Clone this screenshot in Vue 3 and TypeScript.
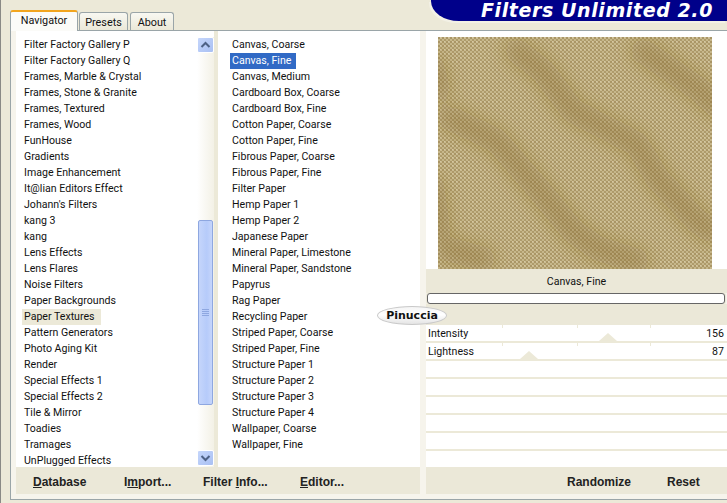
<script setup lang="ts">
const filters: string[] = ['Filter Factory Gallery P','Filter Factory Gallery Q','Frames, Marble & Crystal','Frames, Stone & Granite','Frames, Textured','Frames, Wood','FunHouse','Gradients','Image Enhancement','It@lian Editors Effect',"Johann's Filters",'kang 3','kang','Lens Effects','Lens Flares','Noise Filters','Paper Backgrounds','Paper Textures','Pattern Generators','Photo Aging Kit','Render','Special Effects 1','Special Effects 2','Tile & Mirror','Toadies','Tramages','UnPlugged Effects']
const textures: string[] = ['Canvas, Coarse','Canvas, Fine','Canvas, Medium','Cardboard Box, Coarse','Cardboard Box, Fine','Cotton Paper, Coarse','Cotton Paper, Fine','Fibrous Paper, Coarse','Fibrous Paper, Fine','Filter Paper','Hemp Paper 1','Hemp Paper 2','Japanese Paper','Mineral Paper, Limestone','Mineral Paper, Sandstone','Papyrus','Rag Paper','Recycling Paper','Striped Paper, Coarse','Striped Paper, Fine','Structure Paper 1','Structure Paper 2','Structure Paper 3','Structure Paper 4','Wallpaper, Coarse','Wallpaper, Fine']
const sliders = [
  { label: 'Intensity', value: 156 },
  { label: 'Lightness', value: 87 },
  { label: '', value: -1 },
  { label: '', value: -1 },
  { label: '', value: -1 },
  { label: '', value: -1 },
  { label: '', value: -1 },
  { label: '', value: -1 },
]
const thumb = (v: number) => `${4 + (v / 255) * 291 - 9}px`
</script>

<template>
  <div class="app">
    <header class="top">
      <nav class="tabs">
        <span class="tab active">Navigator</span>
        <span class="tab presets">Presets</span>
        <span class="tab about">About</span>
      </nav>
      <div class="banner">Filters Unlimited 2.0</div>
    </header>
    <main class="panel">
      <section class="left">
        <div class="lists">
          <ul class="list one">
            <li v-for="f in filters" :key="f"><span :class="{ soft: f === 'Paper Textures' }">{{ f }}</span></li>
          </ul>
          <div class="scroll">
            <div class="sbtn">
              <svg width="11" height="8" viewBox="0 0 11 8"><path d="M1.5 6 5.5 2l4 4" fill="none" stroke="#4d6185" stroke-width="2"/></svg>
            </div>
            <div class="track">
              <div class="sthumb"><i></i><i></i><i></i><i></i></div>
            </div>
            <div class="sbtn">
              <svg width="11" height="8" viewBox="0 0 11 8"><path d="M1.5 2 5.5 6l4-4" fill="none" stroke="#4d6185" stroke-width="2"/></svg>
            </div>
          </div>
          <div class="stripe"></div>
          <ul class="list two">
            <li v-for="t in textures" :key="t"><span :class="{ sel: t === 'Canvas, Fine' }">{{ t }}</span></li>
          </ul>
        </div>
        <div class="bar lbar">
          <button class="b1"><u>D</u>atabase</button>
          <button class="b2">I<u>m</u>port...</button>
          <button class="b3">Filter <u>I</u>nfo...</button>
          <button class="b4"><u>E</u>ditor...</button>
        </div>
      </section>
      <section class="right">
        <div class="preview">
          <svg class="texture" width="274" height="232" viewBox="0 0 274 232">
            <defs>
              <pattern id="weave" width="4" height="4" patternUnits="userSpaceOnUse">
                <rect width="4" height="4" fill="#bdac82"/>
                <rect width="2" height="2" fill="#aa9666"/>
                <rect x="2" y="2" width="2" height="2" fill="#ae9b6b"/>
                <rect x="2" width="2" height="2" fill="#cbbc92"/>
                <rect y="2" width="2" height="2" fill="#c6b78b"/>
                <rect x="2" y="0" width="1" height="1" fill="#d6c9a3"/>
              </pattern>
              <filter id="soft" x="-20%" y="-20%" width="140%" height="140%">
                <feGaussianBlur stdDeviation="9"/>
              </filter>
            </defs>
            <rect width="274" height="232" fill="url(#weave)"/>
            <g filter="url(#soft)" fill="none" stroke="#7d5f22" stroke-opacity=".34" stroke-width="24" stroke-linecap="round" stroke-linejoin="round">
              <path d="M79 14 105 34 135 74 199 107 219 141 259 184 274 194"/>
              <path d="M12 81 59 104 102 154 135 194 159 211 199 224"/>
              <path d="M205 14 259 51 280 70"/>
              <path d="M10 212 45 222"/>
              <path d="M-6 30 0 50M-6 150 0 190"/>
            </g>
          </svg>
        </div>
        <div class="caption">Canvas, Fine</div>
        <div class="progress"></div>
        <div class="gap"></div>
        <div v-for="(s, i) in sliders" :key="i" class="slider">
          <span>{{ s.label }}</span>
          <span>{{ s.value >= 0 ? s.value : '' }}</span>
          <template v-if="s.value >= 0">
            <em class="tick t1"></em><em class="tick t2"></em><em class="tick t3"></em>
            <b class="tri" :style="{ left: thumb(s.value) }"></b>
          </template>
        </div>
        <div class="bar rbar">
          <button class="b5">Randomize</button>
          <button class="b6">Reset</button>
        </div>
      </section>
      <div class="badge">Pinuccia</div>
    </main>
  </div>
</template>

<style scoped>
.app {
  width: 727px;
  height: 503px;
  overflow: hidden;
  background: #ece9d8;
  font-family: Roboto, "Noto Sans", sans-serif;
  font-size: 10.6px;
  color: #111;
  box-sizing: border-box;
  padding-left: 9px;
  display: flex;
  flex-direction: column;
  border-left: 1px solid #8a8a86;
}
.top {
  height: 30px;
  display: flex;
  justify-content: space-between;
  align-items: flex-start;
  flex: none;
}
.tabs {
  display: flex;
  align-items: flex-end;
  height: 30px;
  gap: 2px;
  position: relative;
  z-index: 1;
}
.tab {
  height: 17px;
  line-height: 19px;
  text-align: center;
  font-size: 10.8px;
  border: 1px solid #9aa5a8;
  border-bottom: 0;
  border-radius: 3px 3px 0 0;
  background: linear-gradient(#f8f8f2, #ebe8d8);
}
.presets { width: 47px; }
.about { width: 42px; }
.tab.active {
  width: 66px;
  height: 19px;
  line-height: 17px;
  margin-right: -1px;
  margin-bottom: -1px;
  background: #fbfbf8;
  border-top: 2px solid #f2a51e;
}
.banner {
  width: 296px;
  height: 21px;
  background: #00008a;
  border-radius: 0 0 0 28px / 0 0 0 20px;
  color: #fff;
  font: italic bold 19px/20px "DejaVu Sans", sans-serif;
  letter-spacing: 0.6px;
  box-sizing: border-box;
  padding-left: 50px;
  white-space: nowrap;
  box-shadow: -2px 2px 0 #f3f1e6;
}
.panel {
  flex: none;
  height: 470px;
  border: 1px solid #9aa5a8;
  border-right: 0;
  background: #f6f4ec;
  box-sizing: border-box;
  display: flex;
  padding: 0 0 4px 5px;
  gap: 6px;
  position: relative;
}
.left { width: 404px; display: flex; flex-direction: column; }
.lists { height: 436px; display: flex; background: #fff; }
.list {
  list-style: none;
  margin: 0;
  padding: 6px 0 0 8px;
  height: 430px;
  line-height: 16px;
  white-space: nowrap;
  overflow: hidden;
}
.list li { height: 16px; }
.list span { display: inline-block; height: 16px; padding: 0 2px 0 0; }
.one { width: 173px; flex: none; box-sizing: content-box; }
.two { flex: 1; padding-left: 14px; }
.soft { background: #ece9d8; margin-left: -2px; padding: 0 6px 0 2px !important; }
.sel { background: #316ac5; color: #fff; margin-left: -2px; padding: 0 5px 0 2px !important; }
.scroll {
  width: 17px;
  display: flex;
  flex-direction: column;
  margin-top: 6px;
  background: linear-gradient(90deg, #fff, #f3f1e6);
  flex: none;
  padding-bottom: 1px;
  box-sizing: border-box;
  height: 430px;
}
.sbtn {
  width: 15px;
  height: 14px;
  flex: none;
  border: 1px solid #fff;
  border-radius: 2px;
  background: linear-gradient(135deg, #c5d6fb, #a9c0f3);
  display: flex;
  align-items: center;
  justify-content: center;
}
.track { flex: 1; padding-top: 167px; }
.sthumb {
  height: 185px;
  width: 15px;
  box-sizing: border-box;
  margin-left: 1px;
  border: 1px solid #8ea7e0;
  border-radius: 2px;
  background: linear-gradient(90deg, #c5d5fb, #b6cbfa 60%, #c5d5fb);
  display: flex;
  flex-direction: column;
  align-items: center;
  justify-content: center;
  gap: 1px;
}
.sthumb i { display: block; width: 7px; height: 1px; background: #8ea7e0; }
.stripe { width: 4px; flex: none; background: #ece9d8; }
.bar {
  height: 27px;
  background: #ebe8d8;
  display: flex;
  align-items: center;
  flex: none;
  position: relative;
}
button {
  border: 0;
  background: none;
  padding: 0;
  margin-top: 2px;
  font: bold 12px "Liberation Sans", sans-serif;
  color: #222;
  position: absolute;
  white-space: nowrap;
}
.b1 { left: 17px; }
.b2 { left: 108px; }
.b3 { left: 187px; }
.b4 { left: 284px; }
.b5 { left: 141px; }
.b6 { left: 241px; }
.right { flex: 1; display: flex; flex-direction: column; min-width: 0; }
.preview { height: 238px; background: #fff; padding: 6px 15px 0 12px; box-sizing: border-box; flex: none; }
.texture { display: block; }
.caption { height: 24px; background: #ebe8d8; text-align: center; line-height: 26px; flex: none; }
.progress {
  height: 11px;
  flex: none;
  margin: 0 2px 0 1px;
  background: #fff;
  border: 1px solid #666;
  border-radius: 3px;
  box-sizing: border-box;
  box-shadow: 0 0 0 1px #ebe8d8;
}
.gap { height: 21px; background: #ebe8d8; flex: none; }
.slider {
  height: 18px;
  flex: none;
  box-sizing: border-box;
  background: #fff;
  border-bottom: 2px solid #ece9d8;
  display: flex;
  justify-content: space-between;
  padding: 0 3px 0 2px;
  line-height: 18px;
  position: relative;
}
.slider:nth-last-child(2) { height: 16px; border-bottom: 0; }
.tick { position: absolute; top: 0; width: 1px; height: 3px; background: #ece9d8; }
.t1 { left: 76px; }
.t2 { left: 151px; }
.t3 { left: 224px; }
.tri {
  position: absolute;
  bottom: 0;
  width: 0;
  height: 0;
  border-left: 9px solid transparent;
  border-right: 9px solid transparent;
  border-bottom: 8px solid #ece9d8;
}
.badge {
  position: absolute;
  left: 366px;
  top: 275px;
  width: 70px;
  height: 19px;
  border-radius: 50%;
  background: linear-gradient(#f4f4f4, #fff 45%, #e4e4e4);
  border: 1px solid #c9c9c9;
  box-sizing: border-box;
  text-align: center;
  font: bold 11px/17px "DejaVu Sans", sans-serif;
  color: #111;
  z-index: 2;
}
</style>
